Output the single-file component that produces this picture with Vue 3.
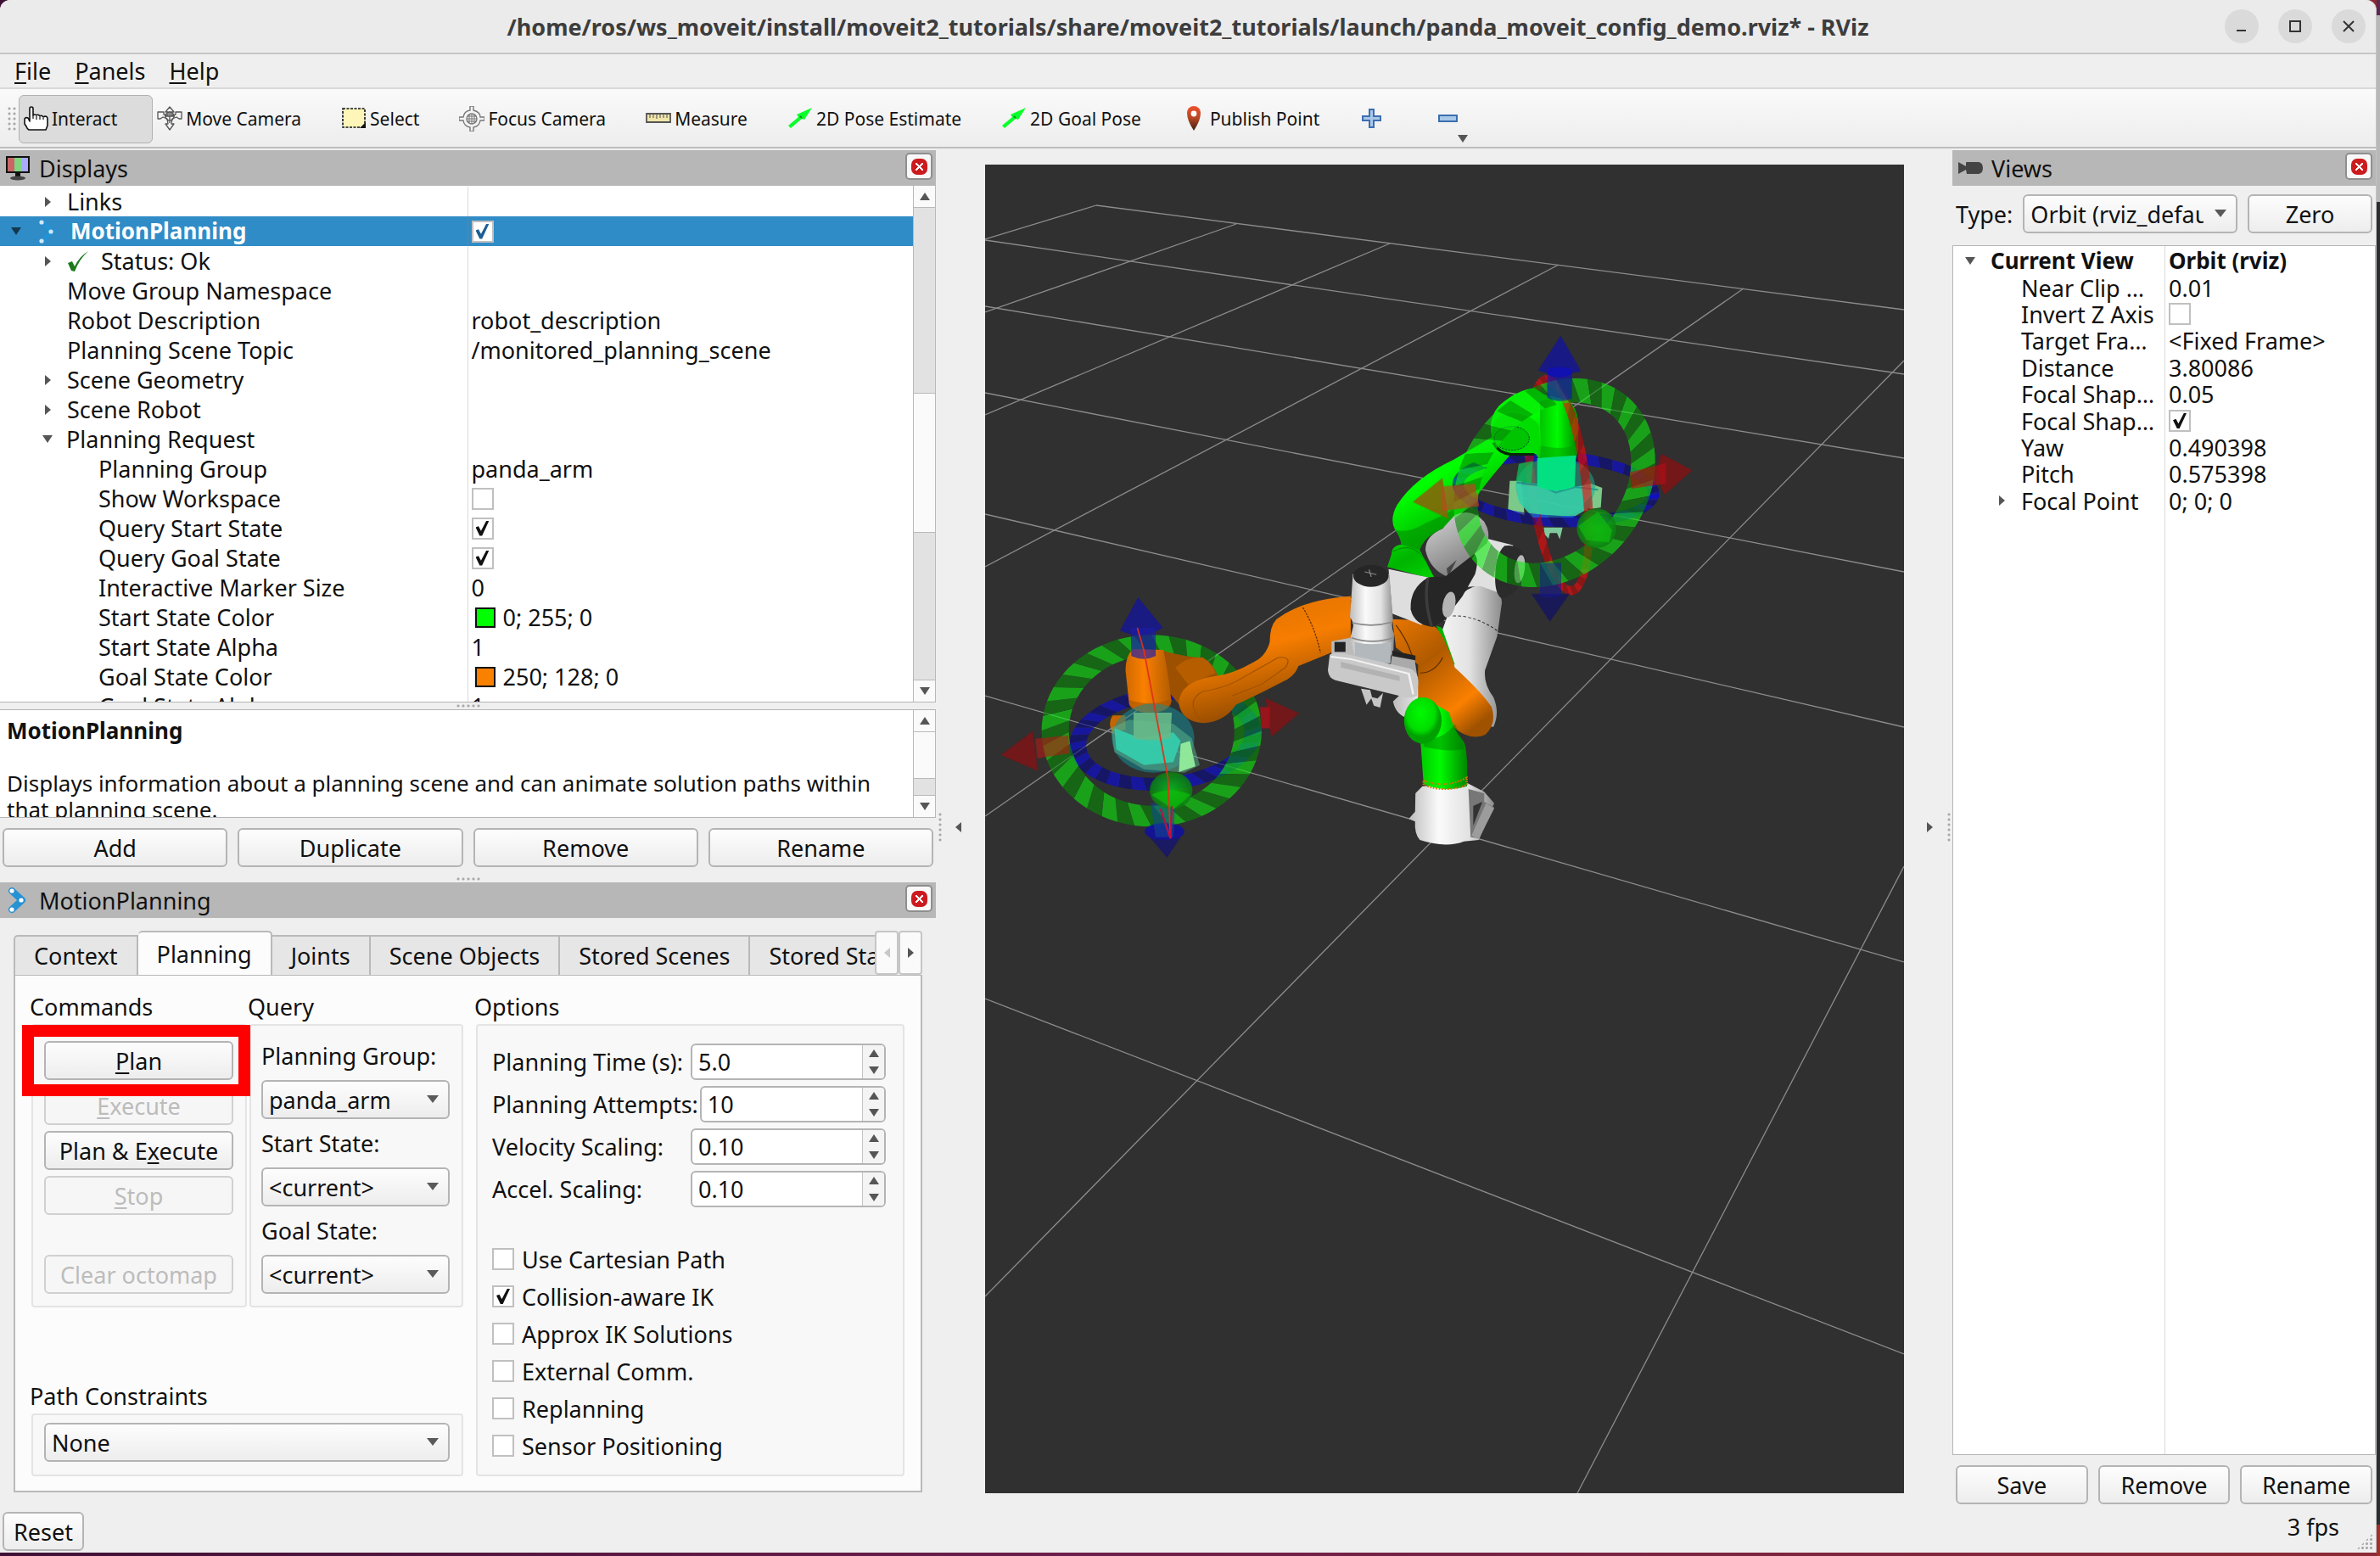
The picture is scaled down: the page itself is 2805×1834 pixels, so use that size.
<template>
  <div class="desktop">
    <div class="window">
      <header class="titlebar">
        <span class="titlebar__text">/home/ros/ws_moveit/install/moveit2_tutorials/share/moveit2_tutorials/launch/panda_moveit_config_demo.rviz* - RViz</span>
        <div class="titlebar__buttons">
          <button aria-label="Minimize"><svg viewBox="0 0 40 40"><path d="M14 25h11" /></svg></button>
          <button aria-label="Maximize"><svg viewBox="0 0 40 40"><path d="M14 14h12v12H14z" /></svg></button>
          <button aria-label="Close"><svg viewBox="0 0 40 40"><path d="M14 14l12 12M26 14L14 26" /></svg></button>
        </div>
      </header>

      <nav class="menu">
        <a href="#"><u>F</u>ile</a>
        <a href="#"><u>P</u>anels</a>
        <a href="#"><u>H</u>elp</a>
      </nav>

      <div class="toolbar">
        <span class="dots dots--tool"></span>
        <button
          v-for="t in tools"
          :key="t.icon + t.label"
          class="tool"
          :class="{ 'tool--on': tool === t.label, 'tool--bare': !t.label }"
          :aria-label="t.label || t.icon"
          @click="tool = t.label"
        >
          <svg class="tool__icon" viewBox="0 0 30 30">
            <template v-if="t.icon === 'hand'">
              <path d="M8 18V3q0-2 2-2t2 2v8q2-2 4 0 2-2 4 1 2-2 4 1l2-1q3 0 3 3v8l-2 5H7q-2-1-3-4l-2-3v-6q1-2 4-1z" fill="#fff" stroke="#111" stroke-width="1.6" stroke-linejoin="round" />
              <path d="M12 11v4M16 12v4M20 13v3M24 14v2" stroke="#111" stroke-width="1.2" />
            </template>
            <g v-else-if="t.icon === 'move'" fill="#f4f4f4" stroke="#555" stroke-width="1.3" stroke-linejoin="round">
              <path d="M15 1l5 6h-3v4l5-1V7h7v8h-3l-3-2-5 2-1 6h3l-5 7-5-7h3l-1-6-5-2-3 2H1V7h7v3l5 1V7h-3z" />
              <circle cx="15" cy="12" r="5" fill="none" />
              <path d="M9 12h12M15 6v14" />
            </g>
            <g v-else-if="t.icon === 'select'">
              <path d="M2 3h26v22H2z" fill="#fdf6b8" stroke="#111" stroke-width="1.6" stroke-dasharray="3 1.5" />
              <path d="M29 19v7h-7z" fill="#111" />
            </g>
            <g v-else-if="t.icon === 'focus'" fill="none" stroke="#777" stroke-width="1.4">
              <path d="M13 0h4v5q8 2 8 8h5v4h-5q-1 7-8 8v5h-4v-5q-7-1-8-8H0v-4h5q1-7 8-8z" />
              <circle cx="15" cy="15" r="6" />
              <path d="M9 15h12M15 9v12M10 12h10M10 18h10M12 10v10M18 10v10" stroke-width="1" />
            </g>
            <g v-else-if="t.icon === 'ruler'">
              <path d="M1 9h28v10H1z" fill="#f1e6a8" stroke="#555" stroke-width="1.8" />
              <path d="M5 10v4M9 10v4M13 10v5M17 10v4M21 10v4M25 10v4" stroke="#666" stroke-width="1.2" />
            </g>
            <g v-else-if="t.icon === 'arrow'">
              <path d="M1 23l12-10-2-3L29 2 20 16l-3-1L4 26z" fill="#0bff2b" />
              <path d="M14 13l4 2-2-4z" fill="#0a8f1a" />
            </g>
            <g v-else-if="t.icon === 'pin'">
              <path d="M15 29Q7 17 7 8a8 8 0 0 1 16 0q0 9-8 21z" fill="url(#pinFill)" />
              <circle cx="15" cy="9" r="3.4" fill="#fff" />
            </g>
            <path v-else-if="t.icon === 'plus'" d="M12 4h5v8h8v5h-8v8h-5v-8H4v-5h8z" fill="#a9c7e8" stroke="#3c6eb0" stroke-width="2" />
            <path v-else d="M4 11h21v7H4z" fill="#a9c7e8" stroke="#3c6eb0" stroke-width="2" />
          </svg>
          <span v-if="t.label">{{ t.label }}</span>
          <i v-if="t.icon === 'minus'" class="tri tri--down tool__more"></i>
        </button>
      </div>

      <main class="main">
        <div class="left">
          <section class="dock">
            <h2 class="dock__head">
              <svg class="dock__icon" viewBox="0 0 30 30">
                <path d="M1 1h28v20H1z" fill="#111" />
                <path d="M3 3h8v16H3z" fill="#c66" /><path d="M11 3h8v16h-8z" fill="#7fd67f" /><path d="M19 3h8v16h-8z" fill="#aaf" />
                <path d="M12 21h6v4h-6z" fill="#111" /><ellipse cx="15" cy="27" rx="9" ry="2.4" fill="#444" />
              </svg>
              Displays
              <button class="dock__close" aria-label="Close Displays"><i></i></button>
            </h2>
            <div class="pane pane--tree">
              <table class="tree tree--displays">
                <tr v-for="r in displays" :key="r.name" :class="{ 'tree__row--on': r.selected }">
                  <td class="tree__name">
                    <span class="tree__label" :class="'tree__label--' + r.level">
                      <i class="tri" :class="r.arrow ? 'tri--' + r.arrow : 'tri--none'"></i>
                      <svg v-if="r.icon === 'mp'" class="tree__mp" viewBox="0 0 30 30">
                        <path d="M8 3l12 12L8 27" fill="none" stroke="#2592d4" stroke-width="6" />
                        <circle cx="8" cy="4" r="2.6" fill="#cfe8f8" /><circle cx="19" cy="15" r="2.6" fill="#cfe8f8" /><circle cx="8" cy="26" r="2.6" fill="#cfe8f8" />
                      </svg>
                      <svg v-if="r.icon === 'ok'" class="tree__ok" viewBox="0 0 26 26"><path d="M1 15l5-2 3 6Q14 8 25 1 14 11 9 25L5 24z" fill="#1c7a1c" /></svg>
                      {{ r.name }}
                    </span>
                  </td>
                  <td>
                    <span class="tree__value">
                      <input v-if="typeof r.value === 'boolean'" v-model="r.value" type="checkbox" class="check" :aria-label="r.name">
                      <template v-else>
                        <i v-if="r.color" class="swatch" :style="{ background: r.color }"></i>{{ r.value }}
                      </template>
                    </span>
                  </td>
                </tr>
              </table>
              <div class="scroll">
                <button aria-label="Scroll up"><i class="tri tri--up"></i></button>
                <span class="scroll__space"></span><span class="scroll__thumb"></span><span class="scroll__rest"></span>
                <button aria-label="Scroll down"><i class="tri tri--down"></i></button>
              </div>
            </div>
            <span class="dots dots--h"></span>
            <div class="pane pane--help">
              <div class="help">
                <b>MotionPlanning</b>
                <p>Displays information about a planning scene and can animate solution paths within that planning scene.</p>
              </div>
              <div class="scroll scroll--help">
                <button aria-label="Scroll up"><i class="tri tri--up"></i></button>
                <span class="scroll__thumb"></span><span class="scroll__rest"></span>
                <button aria-label="Scroll down"><i class="tri tri--down"></i></button>
              </div>
            </div>
            <div class="btnrow">
              <button v-for="b in ['Add', 'Duplicate', 'Remove', 'Rename']" :key="b" class="btn">{{ b }}</button>
            </div>
            <span class="dots dots--h"></span>
          </section>

          <section class="dock">
            <h2 class="dock__head">
              <svg class="dock__icon" viewBox="0 0 30 30">
                <path d="M8 4l12 11L8 26" fill="none" stroke="#2592d4" stroke-width="8" stroke-linejoin="round" stroke-linecap="round" />
                <circle cx="8" cy="4" r="2.6" fill="#fff" /><circle cx="19" cy="15" r="2.6" fill="#fff" /><circle cx="8" cy="26" r="2.6" fill="#fff" />
              </svg>
              MotionPlanning
              <button class="dock__close" aria-label="Close MotionPlanning"><i></i></button>
            </h2>
            <div class="tabs">
              <div class="tabs__list">
                <button v-for="t in tabs" :key="t" class="tab" :class="{ 'tab--on': tab === t }" @click="tab = t">{{ t }}</button>
              </div>
              <button class="tabs__nav" aria-label="Previous tabs" disabled><i class="tri tri--left"></i></button>
              <button class="tabs__nav" aria-label="More tabs"><i class="tri tri--right"></i></button>
            </div>
            <div class="page">
              <div class="page__left">
                <div class="page__pair">
                  <div class="group">
                    <h3>Commands</h3>
                    <div class="group__box commands">
                      <button class="btn"><span><u>P</u>lan</span></button>
                      <button class="btn" disabled><span><u>E</u>xecute</span></button>
                      <button class="btn"><span>Plan &amp; E<u>x</u>ecute</span></button>
                      <button class="btn" disabled><span><u>S</u>top</span></button>
                      <button class="btn commands__clear" disabled>Clear octomap</button>
                      <span class="highlight"></span>
                    </div>
                  </div>
                  <div class="group">
                    <h3>Query</h3>
                    <div class="group__box query">
                      <template v-for="q in queries" :key="q.id">
                        <label :for="q.id">{{ q.label }}</label>
                        <span class="combo"><select :id="q.id"><option>{{ q.value }}</option></select></span>
                      </template>
                    </div>
                  </div>
                </div>
                <div class="group">
                  <h3><label for="constraints">Path Constraints</label></h3>
                  <div class="group__box constraints">
                    <span class="combo"><select id="constraints"><option>None</option></select></span>
                  </div>
                </div>
              </div>
              <div class="group group--options">
                <h3>Options</h3>
                <div class="group__box options">
                  <div v-for="s in spins" :key="s.id" class="spinrow">
                    <label :for="s.id">{{ s.label }}</label>
                    <span class="spin">
                      <input :id="s.id" v-model="s.value" type="text" inputmode="decimal">
                      <span class="spin__btns">
                        <button aria-label="Increase"><i class="tri tri--up"></i></button>
                        <button aria-label="Decrease"><i class="tri tri--down"></i></button>
                      </span>
                    </span>
                  </div>
                  <div class="checks">
                    <label v-for="c in checks" :key="c.label">
                      <input v-model="c.on" type="checkbox" class="check">{{ c.label }}
                    </label>
                  </div>
                </div>
              </div>
            </div>
          </section>
        </div>

        <div class="center">
          <div class="gutter"><i class="dots dots--v"></i><i class="tri tri--left"></i></div>
          <svg class="view" viewBox="1161 194 1083 1566" preserveAspectRatio="xMidYMid slice">
            <defs>
              <linearGradient id="pinFill" x1="0" y1="0" x2="0" y2="1"><stop offset="0" stop-color="#f0512e" /><stop offset=".5" stop-color="#b34524" /><stop offset="1" stop-color="#3c2010" /></linearGradient>
              <linearGradient id="white" x1="0" y1="0" x2="1" y2="0"><stop offset="0" stop-color="#bdbdbd" /><stop offset=".35" stop-color="#fafafa" /><stop offset=".7" stop-color="#e2e2e2" /><stop offset="1" stop-color="#8c8c8c" /></linearGradient>
              <linearGradient id="grey" x1="0" y1="0" x2=".5" y2="1"><stop offset="0" stop-color="#d8d8d8" /><stop offset="1" stop-color="#7c7c7c" /></linearGradient>
              <linearGradient id="orange" x1="0" y1="0" x2=".35" y2="1"><stop offset="0" stop-color="#d86e00" /><stop offset=".5" stop-color="#f67d00" /><stop offset="1" stop-color="#8f4900" /></linearGradient>
              <linearGradient id="orangeLeg" x1="0" y1="0" x2=".7" y2="1"><stop offset="0" stop-color="#e87600" /><stop offset=".4" stop-color="#b05a00" /><stop offset=".8" stop-color="#fa8000" /><stop offset="1" stop-color="#a05200" /></linearGradient>
              <linearGradient id="orangeTube" x1="0" y1="0" x2="1" y2="0"><stop offset="0" stop-color="#d06900" /><stop offset=".4" stop-color="#fa8000" /><stop offset="1" stop-color="#b25b00" /></linearGradient>
              <linearGradient id="green" x1="0" y1="0" x2=".6" y2="1"><stop offset="0" stop-color="#00d800" /><stop offset=".45" stop-color="#00ff00" /><stop offset=".7" stop-color="#00b400" /><stop offset="1" stop-color="#00ff00" /></linearGradient>
              <linearGradient id="greenTube" x1="0" y1="0" x2="1" y2="0"><stop offset="0" stop-color="#00c400" /><stop offset=".45" stop-color="#00fb00" /><stop offset="1" stop-color="#008600" /></linearGradient>
              <radialGradient id="greenBall"><stop offset="0" stop-color="#0bc80b" /><stop offset="1" stop-color="#0d7d12" /></radialGradient>
              <radialGradient id="greenKnob" cx=".45" cy=".35"><stop offset="0" stop-color="#00fa00" /><stop offset=".75" stop-color="#00dc00" /><stop offset="1" stop-color="#00a000" /></radialGradient>
            </defs>

            <!-- ground grid -->
            <g stroke="#8c8c8c" stroke-width="1.3">
              <line v-for="(l, i) in grid" :key="i" :x1="l[0]" :y1="l[1]" :x2="l[2]" :y2="l[3]" />
            </g>

            <!-- start state arm -->
            <g transform="translate(1500 370) scale(.33333)">
              <StripedRing :ring="rings.startBlue" :from="212" :to="360" />
              <StripedRing :ring="rings.startRed" :from="160" :to="250" />
              <path d="M405 895L420 850Q420 820 455 815 452 790 432 762 412 725 440 675 500 580 640 515L775 435Q760 370 800 325 860 270 925 262L960 285 1045 305Q1074 330 1080 380V480L1070 520H945L930 495 838 500Q760 590 725 640 650 735 570 775 530 800 520 835L575 940Z" fill="url(#green)" />
              <path d="M735 625Q650 735 570 775 530 800 520 835L455 815Q452 790 432 762 470 780 540 740 660 690 735 625Z" fill="#009000" opacity=".6" />
              <path d="M945 310Q1000 290 1050 310 1076 340 1080 380V470L1070 512H945L950 465 945 400Z" fill="url(#greenTube)" />
              <path d="M948 465Q1010 485 1078 462L1072 512H945Z" fill="#009c00" opacity=".5" />
              <path d="M775 440Q770 350 850 350 930 360 943 400L935 495 850 492Q800 490 780 455Z" fill="#00de00" />
              <path d="M780 455Q800 495 850 497H925" fill="none" stroke="#062806" stroke-width="10" />
              <ellipse cx="845" cy="440" rx="62" ry="42" fill="#00c400" stroke="#043" stroke-width="3" stroke-dasharray="7 4" />
              <path d="M425 840Q500 800 545 880" fill="none" stroke="#008a00" stroke-width="3" />
            </g>

            <!-- current state arm, leg -->
            <g transform="translate(1140 640) scale(.43367 .33333)">
              <path d="M1310 240Q1345 155 1400 148 1450 160 1453 210L1440 330 1407 450Q1403 500 1430 545 1448 600 1430 650L1200 620Q1165 610 1157 560L1190 520 1310 440 1285 330Z" fill="url(#white)" />
              <path d="M1320 258Q1380 255 1440 310" fill="none" stroke="#333" stroke-width="3" stroke-dasharray="8 6" />
              <path d="M1275 292L1290 300 1325 430 1312 430Z" fill="#00b400" />
            </g>
            <!-- current state arm, forearm and elbow -->
            <g transform="translate(1500 370) scale(.33333)">
              <path d="M700 780L850 818 810 990 735 962 690 965Z" fill="#e0e0e0" />
              <path d="M540 835Q540 785 600 760L645 710Q705 685 748 735 772 775 758 810L700 860 620 930Q555 905 540 835Z" fill="url(#grey)" />
              <path d="M615 900Q640 880 650 870L620 930Z" fill="#444" />
              <path d="M820 820Q875 812 895 865L878 950Q850 1000 808 1005 780 985 788 900 795 840 820 820Z" fill="#2b2b2b" />
              <ellipse cx="873" cy="902" rx="18" ry="50" fill="#b8b8b8" transform="rotate(8 873 902)" />
            </g>

            <!-- goal state arm -->
            <g transform="translate(1140 640) scale(.43367 .33333)">
              <path d="M1155 270Q1240 268 1275 300 1305 350 1325 440 1400 530 1425 580 1440 640 1408 678 1370 700 1330 660L1225 560V430L1165 370Z" fill="url(#orangeLeg)" />
              <path d="M1165 290Q1205 360 1215 430M1230 460Q1270 460 1292 405" fill="none" stroke="#5c2f00" stroke-width="3" />
              <StripedRing :ring="rings.goalBlue" />
              <StripedRing :ring="rings.goalGreen" />
              <path d="M530 380Q600 405 640 405 672 430 682 475L610 500 575 570 550 530Z" fill="#9c5000" />
              <path d="M565 440Q600 400 640 405 665 425 675 460L600 500Z" fill="#b65d00" />
              <path d="M395 610Q380 640 395 670L430 660V610Z" fill="#c56500" />
              <path d="M1042 188Q910 200 840 270 822 295 822 350 812 400 780 420 720 465 670 472 575 490 575 570 585 632 640 637 700 632 730 572 800 530 870 482 892 465 900 435L985 390 1042 345Z" fill="url(#orange)" />
              <path d="M912 228Q945 300 960 388" fill="none" stroke="#5c2f00" stroke-width="3" stroke-dasharray="7 4" />
              <path d="M635 625Q590 560 640 525 690 515 730 490L845 405Q885 400 865 440L800 500 720 540" fill="none" stroke="#a05200" stroke-width="3" />
              <path d="M450 375L533 378Q545 450 555 560 545 597 500 600 450 600 440 570L430 450Q430 400 450 375Z" fill="url(#orangeTube)" />
              <path d="M440 555Q500 580 555 552L553 572Q540 600 500 600 450 598 442 575Z" fill="#a85500" opacity=".6" />

              <!-- base and shoulder -->
              <path d="M1237 860L1360 850 1405 880 1432 920 1390 1050 1350 1055Q1300 1080 1230 1050 1215 1030 1217 985L1200 975 1217 950 1218 885Z" fill="url(#white)" />
              <path d="M1362 870L1405 885 1405 915 1432 935 1390 1045 1368 1040Z" fill="#777" />
              <path d="M1410 920L1432 938 1390 1048 1370 1035Z" fill="#9c9c9c" />
              <path d="M1375 930L1400 915 1375 1000Z" fill="#333" />
              <path d="M1225 545Q1290 580 1310 600 1320 660 1345 695 1362 715 1358 860 1300 885 1240 852L1232 705Z" fill="url(#greenTube)" />
              <path d="M1240 700Q1300 690 1325 640L1345 695 1350 730Q1300 740 1240 720Z" fill="#006c00" opacity=".4" />
              <path d="M1240 840Q1300 870 1357 830L1358 855Q1300 885 1240 856Z" fill="none" stroke="#d07800" stroke-width="6" stroke-dasharray="4 4" />
              <ellipse cx="1238" cy="628" rx="51" ry="82" fill="url(#greenKnob)" />

              <!-- current state arm, front links -->
              <path d="M1145 92L1255 122 1235 290 1155 250Z" fill="#dedede" />
              <path d="M1252 122L1300 118 1378 38Q1392 55 1380 110L1345 190 1315 240 1318 190Z" fill="#262626" />
              <path d="M1252 122Q1300 115 1325 150L1318 190 1295 275 1265 297Q1215 290 1205 235 1202 160 1252 122Z" fill="#262626" />
              <path d="M1252 124Q1240 200 1262 294" fill="none" stroke="#3c3c3c" stroke-width="8" />
              <ellipse cx="1309" cy="218" rx="17" ry="46" fill="#b4b4b4" transform="rotate(8 1309 218)" />
              <path d="M1048 110L1040 262Q1052 285 1048 300L1040 340 1053 410 1140 420 1158 385 1160 320Q1150 295 1157 270L1147 110Z" fill="url(#white)" />
              <path d="M1046 282Q1100 300 1155 280M1044 335Q1100 360 1158 335" fill="none" stroke="#8a8a8a" stroke-width="5" />
              <path d="M1053 350Q1100 365 1152 350L1150 425H1053Z" fill="#b3b8bc" />
              <ellipse cx="1097" cy="116" rx="48" ry="39" fill="#262626" />
              <path d="M1080 102L1112 112M1092 94L1098 120" stroke="#888" stroke-width="3" />
              <path d="M990 348L1040 335 1053 400 990 395Z" fill="#bbb" /><path d="M998 350H1028V385H998Z" fill="#222" />
              <path d="M1155 385L1215 405 1222 465 1150 440Z" fill="#aaa" /><path d="M1155 380L1218 398V415L1155 400Z" fill="#222" />
              <path d="M985 395Q1000 382 1040 395L1205 445Q1225 455 1226 490L1222 540Q1200 552 1180 542L1000 485Q982 478 980 450Z" fill="#c9c9c9" />
              <path d="M988 402L1040 410 1200 462 1212 535" fill="none" stroke="#f2f2f2" stroke-width="6" />
              <path d="M1015 420L1175 470V488L1015 440Z" fill="#b2b2b2" />
              <path d="M1070 515L1095 520 1100 545 1115 550 1130 530 1122 582 1105 575 1098 550 1085 572 1078 545Z" fill="#c4c4c4" />
            </g>

            <!-- goal marker -->
            <g transform="translate(1140 640) scale(.43367 .33333)">
              <ellipse cx="505" cy="690" rx="112" ry="122" fill="#148c96" opacity=".55" />
              <path d="M390 655L440 625 560 640 610 690 632 785 590 812 480 800 400 740Z" fill="#5cb890" opacity=".5" />
              <path d="M400 655L470 690 560 670 580 700 560 775 480 785 405 730Z" fill="#34cfae" opacity=".9" />
              <path d="M452 600H556L552 690Q500 705 452 690Z" fill="#68b988" opacity=".9" />
              <path d="M580 710L605 700 620 790 575 810Z" fill="#8fe89a" />
              <g opacity=".88">
                <path d="M91 750L178 665 192 806Z" fill="#7c1517" /><path d="M185 692L275 680 278 744 190 762Z" fill="#b41c14" opacity=".7" />
                <path d="M902 602L810 548 826 686Z" fill="#7c1517" /><path d="M795 580L822 580V655L800 655Z" fill="#c40a14" opacity=".8" />
                <path d="M464 192L415 310Q470 345 532 300Z" fill="#17178f" /><path d="M444 300H512V400Q480 420 446 400Z" fill="#1a1ab0" opacity=".75" />
                <path d="M482 1020L543 1112 590 1020Z" fill="#17176b" /><ellipse cx="536" cy="1020" rx="54" ry="30" fill="#1111a0" />
                <path d="M498 920L565 925 560 1040H512Z" fill="#0d4aa0" opacity=".6" />
              </g>
              <ellipse cx="554" cy="875" rx="58" ry="66" fill="url(#greenBall)" opacity=".85" />
              <path d="M500 890Q550 860 608 890L560 942Z" fill="#0cc00c" opacity=".7" />
              <path d="M462 300L480 380 545 830 552 1045" fill="none" stroke="#e0301c" stroke-width="4" />
              <path d="M525 940L552 1045 556 930" fill="none" stroke="#c01040" stroke-width="5" />
            </g>

            <!-- start marker -->
            <g transform="translate(1500 370) scale(.33333)">
              <path d="M832 690L838 590 880 590 890 712Z" fill="#7cc98a" />
              <path d="M1125 600L1165 615 1160 685 1120 690Z" fill="#7cc98a" />
              <ellipse cx="1000" cy="612" rx="140" ry="106" fill="#1fa88c" opacity=".55" />
              <path d="M858 600L950 610 1010 625 1125 600 1130 680 1060 720H920L870 665Z" fill="#38cfa8" opacity=".9" />
              <path d="M862 596L945 604 1000 632 1070 612 1150 622" fill="none" stroke="#1f9c90" stroke-width="6" />
              <path d="M935 510L1072 500 1068 610Q1000 640 935 608Z" fill="#00e683" opacity=".95" />
              <path d="M870 530L920 520 915 600 860 590Z" fill="#0cc45a" opacity=".7" />
              <path d="M958 755L1025 755 1015 797 1005 775H980L975 795 962 780Z" fill="#7fca9c" />
              <StripedRing :ring="rings.startBlue" :from="0" :to="212" />
              <StripedRing :ring="rings.startRed" :from="-110" :to="160" />
              <StripedRing :ring="rings.startGreen" />
              <g opacity=".9">
                <path d="M1483 553L1375 495Q1345 560 1385 640Z" fill="#7c1517" /><path d="M1262 560L1390 527V600L1268 618Z" fill="#c00a10" opacity=".65" />
                <path d="M495 665L600 580 622 725Z" fill="#86660a" /><path d="M597 610L715 600 730 680 600 697Z" fill="#d03a24" opacity=".7" />
                <path d="M1018 77L938 200Q1010 225 1090 202Z" fill="#17178f" /><path d="M970 190H1058V300Q1010 318 970 295Z" fill="#1414b8" opacity=".7" />
                <ellipse cx="1014" cy="206" rx="44" ry="18" fill="#0e0ec0" />
                <path d="M915 990L980 1088 1050 990Z" fill="#17175c" /><path d="M945 880H1020V995Q980 1010 945 995Z" fill="#1414a0" opacity=".55" />
              </g>
              <circle cx="1145" cy="758" r="70" fill="url(#greenBall)" opacity=".85" />
              <path d="M1080 750L1150 700 1200 765 1190 808 1110 800Z" fill="#0fb80f" opacity=".7" />
            </g>
          </svg>
          <div class="gutter"><i class="tri tri--right"></i><i class="dots dots--v"></i></div>
        </div>

        <section class="dock dock--views">
          <h2 class="dock__head">
            <svg class="dock__icon" viewBox="0 0 30 30"><path d="M1 8l9 5V9q0-1 1-1h14q5 1 5 7t-5 7H11l-1-5-9 5z" fill="#444" /></svg>
            Views
            <button class="dock__close" aria-label="Close Views"><i></i></button>
          </h2>
          <div class="type">
            <label for="type">Type:</label>
            <span class="combo"><select id="type"><option>Orbit (rviz_default_plugins)</option></select></span>
            <button class="btn">Zero</button>
          </div>
          <div class="views">
            <table class="tree tree--views">
              <tr v-for="(r, i) in views" :key="i" :class="{ 'tree__row--bold': !r.level }">
                <td class="tree__name">
                  <span class="tree__label" :class="'tree__label--v' + r.level">
                    <i class="tri" :class="r.arrow ? 'tri--' + r.arrow : 'tri--none'"></i>{{ r.name }}
                  </span>
                </td>
                <td>
                  <span class="tree__value">
                    <input v-if="typeof r.value === 'boolean'" v-model="r.value" type="checkbox" class="check" :aria-label="r.name">
                    <template v-else>{{ r.value }}</template>
                  </span>
                </td>
              </tr>
            </table>
          </div>
          <div class="btnrow">
            <button v-for="b in ['Save', 'Remove', 'Rename']" :key="b" class="btn">{{ b }}</button>
          </div>
        </section>
      </main>

      <footer class="status">
        <button class="btn">Reset</button>
        <span>3 fps</span>
        <i class="grip"></i>
      </footer>
    </div>
  </div>
</template>

<script setup>
import { ref, reactive, h } from 'vue'

const tool = ref('Interact')
const tools = [
  { icon: 'hand', label: 'Interact' },
  { icon: 'move', label: 'Move Camera' },
  { icon: 'select', label: 'Select' },
  { icon: 'focus', label: 'Focus Camera' },
  { icon: 'ruler', label: 'Measure' },
  { icon: 'arrow', label: '2D Pose Estimate' },
  { icon: 'arrow', label: '2D Goal Pose' },
  { icon: 'pin', label: 'Publish Point' },
  { icon: 'plus', label: '' },
  { icon: 'minus', label: '' },
]

// level is the indent step; boolean values render as tick boxes
const displays = reactive([
  { name: 'Links', level: 1, arrow: 'right' },
  { name: 'MotionPlanning', level: 0, arrow: 'down', icon: 'mp', value: true, selected: true },
  { name: 'Status: Ok', level: 1, arrow: 'right', icon: 'ok' },
  { name: 'Move Group Namespace', level: 1 },
  { name: 'Robot Description', level: 1, value: 'robot_description' },
  { name: 'Planning Scene Topic', level: 1, value: '/monitored_planning_scene' },
  { name: 'Scene Geometry', level: 1, arrow: 'right' },
  { name: 'Scene Robot', level: 1, arrow: 'right' },
  { name: 'Planning Request', level: 1, arrow: 'down' },
  { name: 'Planning Group', level: 2, value: 'panda_arm' },
  { name: 'Show Workspace', level: 2, value: false },
  { name: 'Query Start State', level: 2, value: true },
  { name: 'Query Goal State', level: 2, value: true },
  { name: 'Interactive Marker Size', level: 2, value: '0' },
  { name: 'Start State Color', level: 2, value: '0; 255; 0', color: '#00ff00' },
  { name: 'Start State Alpha', level: 2, value: '1' },
  { name: 'Goal State Color', level: 2, value: '250; 128; 0', color: '#fa8000' },
  { name: 'Goal State Alpha', level: 2, value: '1' },
])

const views = reactive([
  { name: 'Current View', level: 0, arrow: 'down', value: 'Orbit (rviz)' },
  { name: 'Near Clip …', level: 1, value: '0.01' },
  { name: 'Invert Z Axis', level: 1, value: false },
  { name: 'Target Fra…', level: 1, value: '<Fixed Frame>' },
  { name: 'Distance', level: 1, value: '3.80086' },
  { name: 'Focal Shap…', level: 1, value: '0.05' },
  { name: 'Focal Shap…', level: 1, value: true },
  { name: 'Yaw', level: 1, value: '0.490398' },
  { name: 'Pitch', level: 1, value: '0.575398' },
  { name: 'Focal Point', level: 1, arrow: 'right', value: '0; 0; 0' },
])

const tab = ref('Planning')
const tabs = ['Context', 'Planning', 'Joints', 'Scene Objects', 'Stored Scenes', 'Stored States']

const queries = [
  { id: 'group', label: 'Planning Group:', value: 'panda_arm' },
  { id: 'start', label: 'Start State:', value: '<current>' },
  { id: 'goal', label: 'Goal State:', value: '<current>' },
]
const spins = reactive([
  { id: 'time', label: 'Planning Time (s):', value: '5.0' },
  { id: 'attempts', label: 'Planning Attempts:', value: '10' },
  { id: 'velocity', label: 'Velocity Scaling:', value: '0.10' },
  { id: 'accel', label: 'Accel. Scaling:', value: '0.10' },
])
const checks = reactive([
  { label: 'Use Cartesian Path', on: false },
  { label: 'Collision-aware IK', on: true },
  { label: 'Approx IK Solutions', on: false },
  { label: 'External Comm.', on: false },
  { label: 'Replanning', on: false },
  { label: 'Sensor Positioning', on: false },
])

// x1, y1, x2, y2
const grid = [
  [1292, 242, 2244, 365],
  [1161, 283, 2244, 441],
  [1161, 361, 2244, 540],
  [1161, 463, 2244, 674],
  [1161, 606, 2244, 857],
  [1161, 820, 2244, 1134],
  [1161, 1177, 2244, 1596],
  [1292, 242, 1161, 282],
  [1457, 264, 1161, 368],
  [1638, 287, 1161, 489],
  [1837, 312, 1161, 668],
  [2055, 340, 1161, 962],
  [2244, 425, 1161, 1528],
  [2244, 1021, 1859, 1760],
]

const rings = {
  goalBlue: { cx: 538, cy: 692, rx: 240, ry: 158, w: 46, rot: -10, skew: 5, light: '#0808e6', dark: '#05058a' },
  goalGreen: { cx: 501, cy: 664, rx: 262, ry: 302, w: 74, rot: 0, skew: 8, light: '#0cec0c', dark: '#068a06' },
  startBlue: { cx: 1001, cy: 619, rx: 346, ry: 114, w: 40, rot: 3, skew: 5, light: '#0808e6', dark: '#05058a' },
  startRed: { cx: 1012, cy: 605, rx: 96, ry: 376, w: 32, rot: -7, skew: 5, light: '#ff0808', dark: '#c80606' },
  startGreen: { cx: 996, cy: 597, rx: 356, ry: 280, w: 86, rot: -50, skew: 8, light: '#0cec0c', dark: '#068a06' },
}
const STEP = 9

function ringPoint(r, side, deg) {
  const a = deg * Math.PI / 180
  const x = r.cx + (r.rx + side * r.w / 2) * Math.cos(a)
  const y = r.cy + (r.ry + side * r.w / 2) * Math.sin(a)
  return x.toFixed(1) + ',' + y.toFixed(1)
}
// Alternating slanted tiles round an ellipse, the inner edge turned by skew degrees.
function StripedRing({ ring: r, from = 0, to = 360 }) {
  const tiles = []
  for (let i = 0, a = from; a < to; i++, a += STEP) {
    const b = a + STEP
    const m = (a + b) / 2
    const pts = [
      ringPoint(r, 1, a), ringPoint(r, 1, m), ringPoint(r, 1, b),
      ringPoint(r, -1, b + r.skew), ringPoint(r, -1, m + r.skew), ringPoint(r, -1, a + r.skew),
    ]
    tiles.push(h('polygon', { points: pts.join(' '), fill: i % 2 ? r.dark : r.light }))
  }
  return h('g', { opacity: 0.6, transform: `rotate(${r.rot} ${r.cx} ${r.cy})` }, tiles)
}
StripedRing.props = ['ring', 'from', 'to']
</script>

<style>
body { margin: 0; }
</style>

<style scoped>
* { box-sizing: border-box; }
.desktop {
  display: flex;
  min-height: 100vh;
  padding: 0 4px 4px 0;
  background:
    linear-gradient(#5e2750 0 1%, #b8b8b8 1% 13%, #2a2e30 13% 98%, #a03028 98%) right / 4px 100% no-repeat,
    linear-gradient(90deg, #3f1035, #6d1d4b 45%, #8c2a35);
}
.window {
  flex: 1;
  min-width: 0;
  display: flex;
  flex-direction: column;
  background: #efefef;
  border-right: 1px solid #c4c4c4;
  border-radius: 12px 12px 0 0;
  color: #111;
  font: 27px/35px "Noto Sans", "Open Sans", sans-serif;
}
button, select, input { font: inherit; color: inherit; margin: 0; padding: 0; }
u { text-decoration-thickness: 2px; text-underline-offset: 3px; }

.titlebar {
  display: grid;
  grid-template-columns: 1fr auto 1fr;
  align-items: center;
  height: 64px;
  background: #ebebeb;
  border-bottom: 2px solid #c6c6c6;
  border-radius: 12px 12px 0 0;
  color: #3d3d3d;
}
.titlebar__text { grid-column: 2; font-weight: bold; }
.titlebar__buttons { display: flex; gap: 23px; justify-content: flex-end; padding-right: 12px; }
.titlebar__buttons button {
  width: 40px;
  height: 40px;
  border: 0;
  border-radius: 50%;
  background: #dadada;
}
.titlebar__buttons svg { display: block; fill: none; stroke: #333; stroke-width: 2; }

.menu {
  display: flex;
  gap: 28px;
  align-items: center;
  height: 41px;
  padding-left: 17px;
  border-bottom: 2px solid #d8d8d8;
}
.menu a { color: inherit; text-decoration: none; }

.toolbar {
  display: flex;
  align-items: center;
  height: 70px;
  padding: 2px 0 0 8px;
  background: linear-gradient(#fafafa, #ededed);
  border-bottom: 2px solid #bdbdbd;
  font-size: 21px;
}
.tool {
  position: relative;
  display: flex;
  align-items: center;
  gap: 4px;
  height: 57px;
  padding: 0 41px 0 4px;
  border: 1px solid transparent;
  border-radius: 6px;
  background: none;
}
.tool--on { background: #dcdcdc; border-color: #b0b0b0; }
.tool--bare { padding-right: 54px; }
.tool__icon { width: 30px; height: 30px; flex: none; }
.tool__more { position: absolute; left: 30px; bottom: 0; }

.dots { flex: none; background: radial-gradient(circle, #a8a8a8 1px, transparent 2px) 0 0 / 6px 6px; }
.dots--tool { width: 12px; height: 30px; margin-right: 2px; }
.dots--h { width: 30px; height: 4px; margin: 2px auto; background-size: 6px 4px; }
.dots--v { width: 4px; height: 36px; background-size: 4px 6px; }

.tri { display: block; flex: none; width: 0; height: 0; border: 6px solid transparent; color: #555; }
.tri--up { border-bottom: 9px solid; border-top: 0; }
.tri--down { border-top: 9px solid; border-bottom: 0; }
.tri--left { border-right: 7px solid; border-left: 0; }
.tri--right { border-left: 7px solid; border-right: 0; }

.main {
  flex: 1;
  display: grid;
  grid-template-columns: 1103px minmax(0, 1fr) 499px;
  padding-top: 2px;
}
.left { display: flex; flex-direction: column; }
.dock { display: flex; flex-direction: column; }
.dock__head {
  display: flex;
  align-items: center;
  gap: 10px;
  height: 42px;
  margin: 0;
  padding: 0 4px 0 6px;
  background: #b7b7b7;
  font-size: 27px;
  font-weight: normal;
}
.dock__icon { width: 30px; height: 30px; }
.dock__close {
  width: 32px;
  height: 32px;
  margin: 0 0 4px auto;
  display: grid;
  place-items: center;
  border: 2px solid #8e8e8e;
  border-radius: 5px;
  background: #f8f8f8;
}
.dock__close i {
  width: 19px;
  height: 19px;
  border-radius: 7px;
  background:
    linear-gradient(45deg, transparent 42%, #fff 42% 58%, transparent 58%) center / 9px 9px no-repeat,
    linear-gradient(-45deg, transparent 42%, #fff 42% 58%, transparent 58%) center / 9px 9px no-repeat,
    #cc1a1e;
}

.pane { display: flex; background: #fff; border-bottom: 1px solid #b5b5b5; overflow: hidden; }
.pane--tree { height: 609px; }
.pane--help { height: 128px; border-top: 1px solid #b5b5b5; }
.tree { border-collapse: collapse; table-layout: fixed; white-space: nowrap; }
.tree td { padding: 0; }
.tree--displays { flex: 1; align-self: flex-start; margin-top: 1px; }
.tree--displays tr { height: 35px; }
.tree__name { border-right: 1px solid #dadada; }
.tree--displays .tree__name { width: 551px; }
.tree__row--on { background: #308cc6; color: #fff; font-size: 26px; font-weight: bold; }
.tree__row--on .tree__name { border-color: #5a86a3; }
.tree__row--on .tri { color: #12384f; }
.tree__row--on .check { color: #1c5f96; }
.tree__row--bold { font-size: 26px; font-weight: bold; }
.tree__label, .tree__value { display: flex; align-items: center; }
.tree__label .tri { margin-right: 19px; }
.tree__label .tri--down { margin: 0 16px 0 -3px; }
.tri--none { border-width: 0; width: 7px; }
.tree__label--0 { padding-left: 16px; }
.tree__label--0 .tri--down { margin-right: 16px; }
.tree__label--1 { padding-left: 53px; }
.tree__label--2 { padding-left: 90px; }
.tree__mp { width: 30px; height: 30px; margin-right: 12px; }
.tree__ok { width: 26px; height: 26px; margin-right: 14px; }
.tree__value { padding-left: 4px; }
.swatch { width: 24px; height: 24px; margin: 0 9px 0 4px; border: 2px solid #111; }

.check {
  flex: none;
  appearance: none;
  width: 26px;
  height: 26px;
  border: 2px solid #c0c0c0;
  background: #fff;
  color: #111;
}
.check:checked::before {
  content: "";
  display: block;
  width: 16px;
  height: 18px;
  margin: 2px 3px;
  background: currentColor;
  clip-path: polygon(0 45%, 22% 38%, 40% 68%, 80% 0, 100% 0, 48% 100%, 30% 100%);
}

.scroll { display: flex; flex-direction: column; width: 27px; background: #e2e2e2; border: solid #b9b9b9; border-width: 0 1px; }
.scroll button, .scroll__thumb { border: 0; background: #fafafa; }
.scroll button { display: grid; place-items: center; height: 26px; border-bottom: 1px solid #b9b9b9; }
.scroll button:last-child { border-top: 1px solid #b9b9b9; border-bottom: 0; }
.scroll__space { flex: 219; }
.scroll__thumb { flex: 164; border: solid #b9b9b9; border-width: 1px 0; }
.scroll__rest { flex: 174; }
.scroll--help .scroll__thumb { flex: 55; border-top: 0; }
.scroll--help .scroll__rest { flex: 20; }
.help { flex: 1; padding: 9px 8px; font-size: 26px; line-height: 31px; }
.help p { margin: 31px 0 0; }

.btnrow { display: flex; gap: 12px; padding: 12px 3px 10px; }
.btnrow .btn { flex: 1; }
.btn {
  height: 46px;
  border: 2px solid #b4b4b4;
  border-radius: 6px;
  background: linear-gradient(#fdfdfd, #ededed);
  white-space: nowrap;
}
.btn:disabled { color: #bcbcbc; border-color: #d0d0d0; background: #f6f6f6; }

.tabs { display: flex; align-items: flex-end; margin: 15px 16px 0; }
.tabs__list { flex: 1; min-width: 0; display: flex; align-items: flex-end; overflow: hidden; }
.tab {
  flex: none;
  height: 47px;
  padding: 0 22px;
  border: 1px solid #b9b9b9;
  border-width: 2px 2px 0 0;
  background: #e6e6e6;
}
.tab:first-child { border-left-width: 2px; border-top-left-radius: 5px; }
.tab--on { height: 52px; background: #fcfcfc; border-radius: 5px 5px 0 0; }
.tabs__nav {
  display: grid;
  place-items: center;
  width: 28px;
  height: 52px;
  border: 2px solid #c6c6c6;
  border-radius: 4px;
  background: #fafafa;
}
.tabs__nav:disabled .tri { color: #c8c8c8; }
.page {
  display: flex;
  gap: 15px;
  margin: 0 16px;
  padding: 19px 19px 17px;
  border: 2px solid #b9b9b9;
  border-top-width: 1px;
  background: #fcfcfc;
}
.page__left { width: 509px; display: flex; flex-direction: column; justify-content: space-between; }
.page__pair { display: grid; grid-template-columns: 254px 1fr; gap: 3px; }
.group { display: flex; flex-direction: column; }
.group--options { flex: 1; }
.group h3 { margin: 0 0 3px -2px; font-size: 27px; font-weight: normal; }
.group__box { flex: 1; border: 2px solid #e4e4e4; border-radius: 4px; background: #f8f8f8; }
.commands { position: relative; display: flex; flex-direction: column; gap: 7px; padding: 18px 14px 14px 13px; }
.commands__clear { margin-top: 40px; }
.highlight { position: absolute; inset: -1px -6px auto -13px; height: 84px; border: 14px solid #fe0000; pointer-events: none; }
.query { display: flex; flex-direction: column; gap: 8px; padding: 15px 14px 14px 12px; }
.query label { line-height: 41px; }
.combo { position: relative; display: block; }
.combo select {
  appearance: none;
  display: block;
  width: 100%;
  height: 46px;
  padding: 0 38px 0 7px;
  border: 2px solid #b4b4b4;
  border-radius: 6px;
  background: linear-gradient(#fdfdfd, #ededed);
  overflow: hidden;
}
.combo::after {
  content: "";
  position: absolute;
  right: 13px;
  top: 18px;
  border: solid transparent;
  border-width: 9px 7px 0;
  border-top-color: #5a5a5a;
}
.constraints { padding: 9px 14px 15px 13px; }
.options { padding: 21px 20px 12px 17px; }
.spinrow { display: flex; align-items: center; justify-content: space-between; gap: 2px; margin-bottom: 7px; }
.spin { display: flex; width: 230px; flex-shrink: 1; height: 43px; border: 2px solid #b4b4b4; border-radius: 6px; background: #fff; overflow: hidden; }
.spinrow label { flex: none; }
.spin input { flex: 1; min-width: 0; padding-left: 7px; border: 0; background: none; }
.spin__btns { display: grid; width: 26px; border-left: 1px solid #c4c4c4; background: #f4f4f4; }
.spin__btns button { display: grid; place-items: center; border: 0; background: none; }
.checks { display: grid; margin-top: 39px; }
.checks label { display: flex; align-items: center; gap: 9px; height: 44px; }

.center { display: grid; grid-template-columns: 58px minmax(0, 1fr) 57px; }
.view { width: 100%; height: 1566px; margin-top: 17px; background: #303030; }
.gutter { display: flex; align-items: center; justify-content: space-between; padding: 0 28px 0 3px; }
.gutter:last-child { padding: 0 2px 0 27px; }

.type { display: flex; align-items: center; gap: 12px; padding: 10px 4px 14px; }
.type .combo { flex: 1; }
.type .btn { width: 147px; }
.views {
  flex: 1;
  border: 1px solid #b5b5b5;
  background: linear-gradient(#dadada, #dadada) 249px 0 / 1px 100% no-repeat #fff;
}
.tree--views { width: 100%; height: 314px; line-height: 31px; margin-top: 2px; }
.tree--views .tree__name { width: 250px; border: 0; }
.tree__label--v0 { padding-left: 17px; }
.tree__label--v0 .tri--down { margin-right: 18px; }
.tree__label--v1 { padding-left: 54px; }
.dock--views .btnrow { padding: 12px 4px 0; }

.status {
  position: relative;
  display: flex;
  align-items: center;
  justify-content: space-between;
  height: 57px;
  padding: 9px 43px 2px 3px;
  flex: none;
}
.status .btn { width: 96px; }
.status span { margin-bottom: 12px; }
.grip {
  position: absolute;
  right: 3px;
  bottom: 3px;
  width: 20px;
  height: 20px;
  background: radial-gradient(circle, #a8a8a8 1px, transparent 2px) 0 0 / 5px 5px;
  clip-path: polygon(100% 0, 100% 100%, 0 100%);
}
</style>
